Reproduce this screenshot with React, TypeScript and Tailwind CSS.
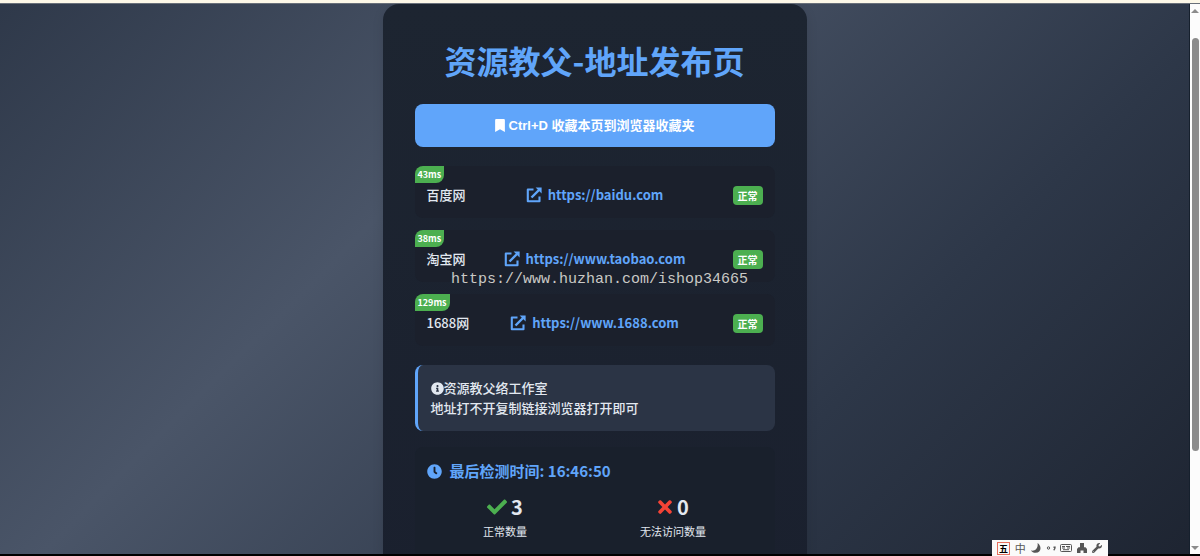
import type React from "react"
import { FaBookmark, FaCheck, FaClock, FaInfoCircle, FaTimes, FaWrench } from "react-icons/fa"

interface Site {
  name: string
  url: string
  delay: string
}

const sites: Site[] = [
  { name: "百度网", url: "https://baidu.com", delay: "43ms" },
  { name: "淘宝网", url: "https://www.taobao.com", delay: "38ms" },
  { name: "1688网", url: "https://www.1688.com", delay: "129ms" },
]

function ExternalLinkIcon() {
  return (
    <svg viewBox="0 0 16 16" className="size-4 shrink-0" fill="none" stroke="currentColor" aria-hidden="true">
      <path d="M7.5 2.5H1.8v11.7h11.7V9.5" strokeWidth="2.1" strokeLinejoin="round" />
      <path d="M5.5 10.5L13 3" strokeWidth="2.4" />
      <path d="M9.6 .4h6v6z" fill="currentColor" stroke="none" />
    </svg>
  )
}

function SiteRow({ site }: { site: Site }) {
  return (
    <li className="relative grid h-[52px] grid-cols-[1fr_auto_1fr] items-center rounded-lg bg-[#1b202c] px-3 pt-1.5">
      <span className="absolute top-0 left-0 rounded-tl-lg rounded-br-lg bg-[#4caf50] px-[3px] text-[9px] leading-[17px] font-bold text-white">
        {site.delay}
      </span>
      <span className="text-[13px] leading-5 font-medium">{site.name}</span>
      <a href={site.url} className="flex items-center gap-1.5 text-[13px] leading-5 font-bold text-[#60a5fa]">
        <ExternalLinkIcon />
        {site.url}
      </a>
      <span className="justify-self-end rounded-sm bg-[#4caf50] px-[5px] text-[10px] leading-[19px] font-bold text-white">
        正常
      </span>
    </li>
  )
}

function Stat({ icon, value, label }: { icon: React.ReactNode; value: number; label: string }) {
  return (
    <div className="flex flex-col items-center">
      <div className="flex items-center gap-1 text-xl leading-6 font-bold">
        {icon}
        {value}
      </div>
      <div className="mt-0.5 text-[11px] leading-5">{label}</div>
    </div>
  )
}

function Scrollbar() {
  return (
    <div className="flex w-[11px] shrink-0 flex-col items-center overflow-hidden border-l border-[#16202d] bg-[#fcfcfc] text-[#8b8b8b]">
      <svg viewBox="0 0 8 4" className="mt-[5px] h-1 w-2 shrink-0" fill="currentColor" aria-hidden="true">
        <path d="M4 0l4 4H0z" />
      </svg>
      <div className="mt-[25px] h-3/4 w-[7px] rounded-full bg-[#8b8b8b]" />
      <svg viewBox="0 0 8 4" className="mt-auto mb-1 h-1 w-2 shrink-0" fill="currentColor" aria-hidden="true">
        <path d="M0 0h8L4 4z" />
      </svg>
    </div>
  )
}

function InputToolbar() {
  return (
    <div className="absolute right-[92px] bottom-0 flex h-4 w-[116px] items-center justify-between bg-[#fafafa] pr-1.5 pl-[5px] text-[#555]">
      <span className="border border-[#e8705f] px-px text-[9px] leading-[11px] font-bold text-black">五</span>
      <span className="text-[11px] leading-4">中</span>
      <svg viewBox="0 0 10 10" className="size-2.5" fill="currentColor" aria-hidden="true">
        <path d="M6.5 0C11 3 10.500 9.500 4.500 9.800 2.500 9.800 1 9 0 7.500 4.500 8.500 7.500 4.500 6.500 0z" />
      </svg>
      <svg viewBox="0 0 10 10" className="size-2.5" fill="none" stroke="currentColor" aria-hidden="true">
        <circle cx="2.500" cy="5" r="1.200" />
        <path d="M7.500 4.300h1.500c0 1.500-.3 2.200-1.300 3" strokeWidth="1.400" />
      </svg>
      <svg viewBox="0 0 12 8" className="h-2 w-3" fill="none" stroke="currentColor" aria-hidden="true">
        <rect x=".5" y=".5" width="11" height="7" rx="1" />
        <path d="M2 2.500h3M6 2.500h4M2 4h3M7 4h3M3 5.700h6" />
      </svg>
      <svg viewBox="0 0 10 10" className="size-2.5" fill="currentColor" aria-hidden="true">
        <path d="M3 0h4v4.200h1.500L10 6v4H6.500V7.500h-3V10H0V6l1.500-1.800H3z" />
      </svg>
      <FaWrench className="size-2.5" />
    </div>
  )
}

export default function App() {
  return (
    <div className="relative flex h-screen flex-col overflow-hidden bg-black font-['Noto_Sans_CJK_SC',sans-serif] text-[#e2e8f0]">
      <div className="h-1 shrink-0 border-b border-[#69707a] bg-[#fdf8e8]" />
      <div className="flex min-h-0 flex-1">
        <main className="flex flex-1 justify-center overflow-hidden bg-[linear-gradient(135deg,#2d3748_-2%,#4a5568_34%,#2d3748_71%,#1a202c_107%)]">
          <div className="h-max w-full max-w-[424px] rounded-2xl bg-linear-to-b from-[#1d2531] to-[#1a202e] px-8 pt-8 pb-8 shadow-[0_3px_12px_rgba(0,0,0,0.1)]">
            <h1 className="text-center text-[32px] leading-12 font-bold text-[#60a5fa]">资源教父-地址发布页</h1>
            <button
              type="button"
              className="mt-5 flex h-[43px] w-full items-center justify-center gap-1 rounded-lg bg-[#60a5fa] font-['Liberation_Sans','Noto_Sans_CJK_SC',sans-serif] text-[13px] font-bold text-white"
            >
              <FaBookmark className="h-[13px] w-2.5" />
              Ctrl+D 收藏本页到浏览器收藏夹
            </button>
            <ul className="mt-[19px] flex flex-col gap-3">
              {sites.map((site) => (
                <SiteRow key={site.url} site={site} />
              ))}
            </ul>
            <section className="mt-[19px] rounded-lg border-l-3 border-[#60a5fa] bg-[#2b3445] p-[13px] text-[13px] leading-5 font-medium">
              <p className="flex items-center">
                <FaInfoCircle className="size-[13px]" />
                资源教父络工作室
              </p>
              <p>地址打不开复制链接浏览器打开即可</p>
            </section>
            <section className="mt-4 rounded-lg bg-[#19202c] p-3 pb-6">
              <h2 className="flex items-center gap-2 text-[15px] leading-6 font-bold text-[#60a5fa]">
                <FaClock />
                最后检测时间: 16:46:50
              </h2>
              <div className="mt-3 flex justify-around">
                <Stat icon={<FaCheck className="text-[#4caf50]" />} value={3} label="正常数量" />
                <Stat icon={<FaTimes className="w-4 text-[#f44336]" />} value={0} label="无法访问数量" />
              </div>
            </section>
          </div>
        </main>
        <Scrollbar />
      </div>
      <div className="h-0.5 shrink-0 bg-black" />
      <div className="pointer-events-none absolute top-[270px] left-1/2 -ml-[149px] font-['Liberation_Mono',monospace] text-[15px] leading-5 text-[#c9c9c6]">
        https://www.huzhan.com/ishop34665
      </div>
      <InputToolbar />
    </div>
  )
}
